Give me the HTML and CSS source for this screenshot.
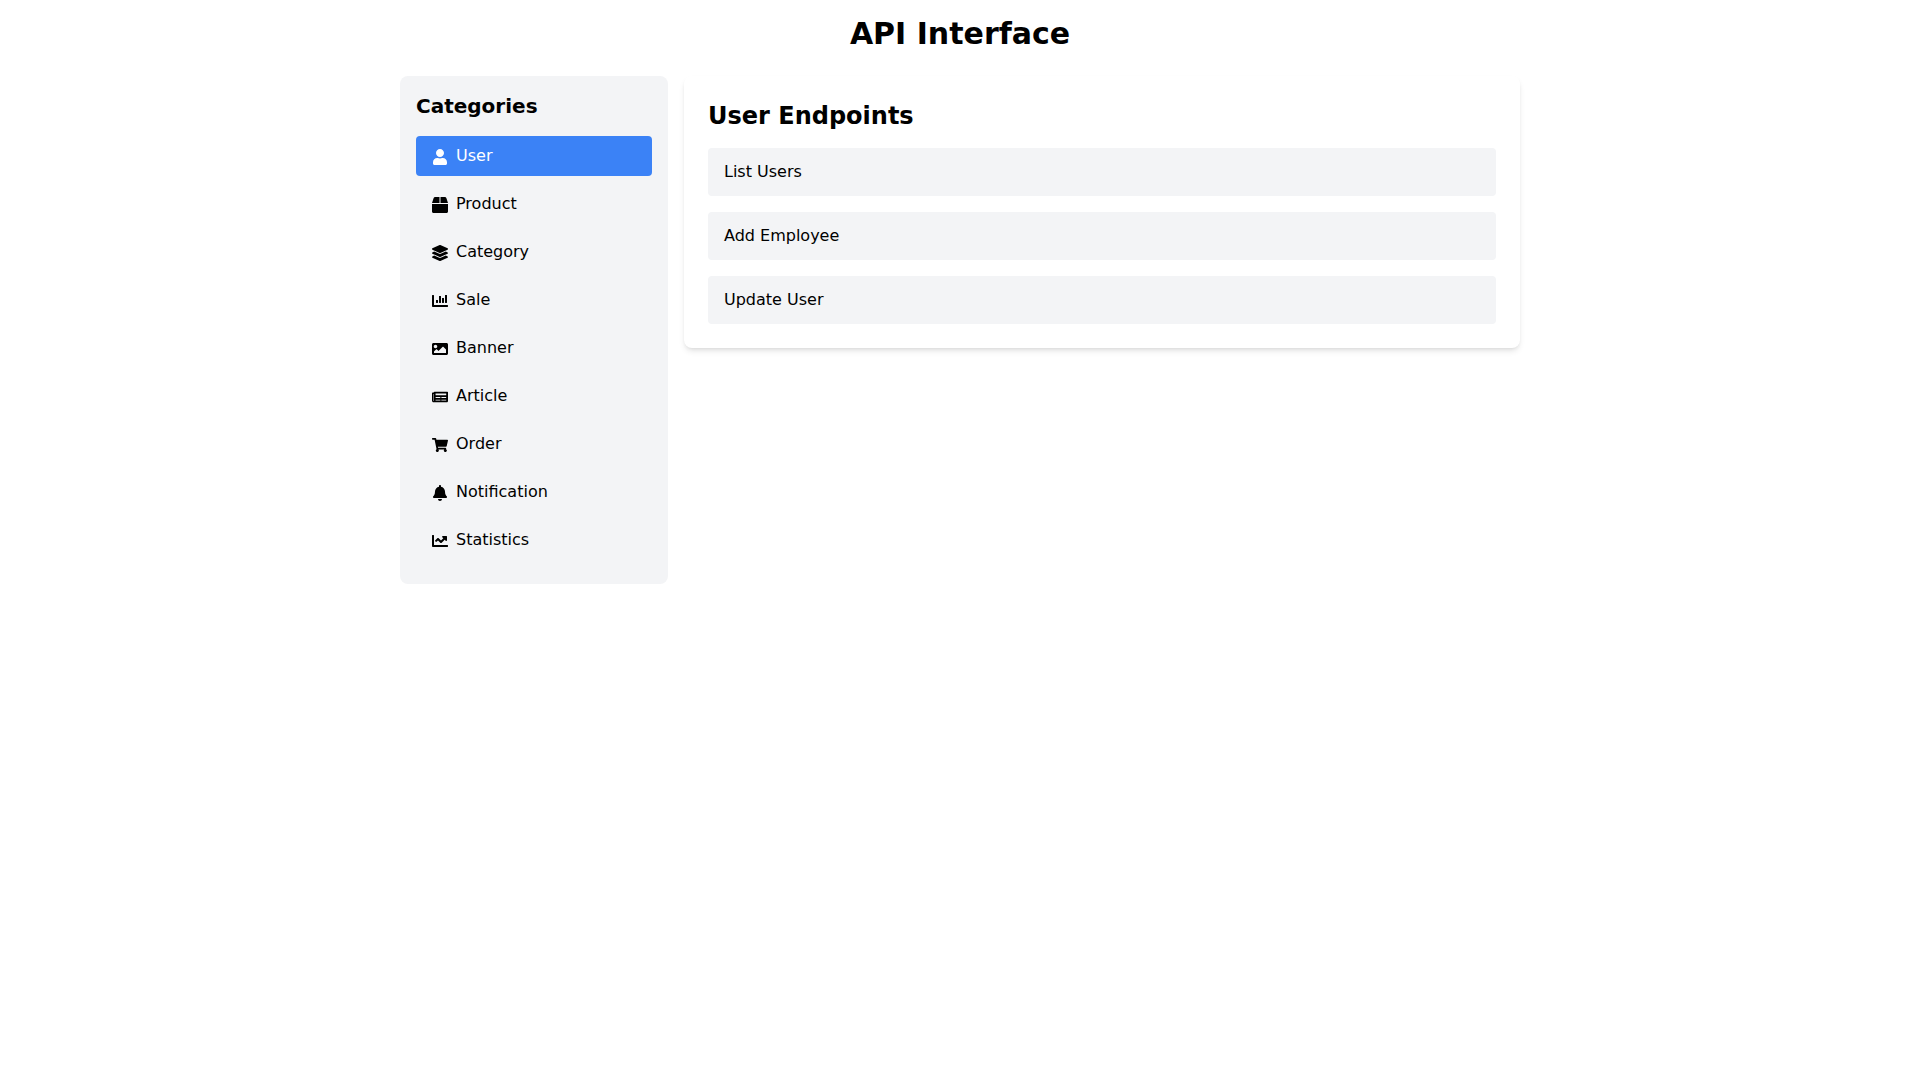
FILE: index.html
```html
<!DOCTYPE html>
<html lang="en">
<head>
    <meta charset="UTF-8">
    <meta name="viewport" content="width=device-width, initial-scale=1.0">
    <title>API Interface</title>
    <link rel="stylesheet" href="styles.css">
</head>
<body>
    <div class="container">
        <h1 class="page-title">API Interface</h1>

        <div class="layout">
            <!-- Sidebar -->
            <nav class="sidebar">
                <h2 class="sidebar-title">Categories</h2>
                <ul class="category-list">
                    <li>
                        <button class="category active">
                            <svg class="icon" viewBox="0 0 448 512"><path d="M224 256c70.7 0 128-57.3 128-128S294.7 0 224 0 96 57.3 96 128s57.3 128 128 128zm89.6 32h-16.7c-22.2 10.2-46.9 16-72.9 16s-50.6-5.8-72.9-16h-16.7C60.2 288 0 348.2 0 422.4V464c0 26.5 21.5 48 48 48h352c26.5 0 48-21.5 48-48v-41.6c0-74.2-60.2-134.4-134.4-134.4z"/></svg><span>User</span>
                        </button>
                    </li>
                    <li>
                        <button class="category">
                            <svg class="icon" viewBox="0 0 512 512"><path d="M509.5 184.6L458.9 32.8C452.4 13.2 434.1 0 413.4 0H272v192h238.7c-.4-2.5-.4-5-1.2-7.4zM240 0H98.6c-20.7 0-39 13.2-45.5 32.8L2.5 184.6c-.8 2.4-.8 4.9-1.2 7.4H240V0zM0 224v240c0 26.5 21.5 48 48 48h416c26.5 0 48-21.5 48-48V224H0z"/></svg><span>Product</span>
                        </button>
                    </li>
                    <li>
                        <button class="category">
                            <svg class="icon" viewBox="0 0 512 512"><path d="M12.41 148.02l232.94 105.67c6.8 3.09 14.49 3.09 21.29 0l232.94-105.67c16.55-7.51 16.55-32.52 0-40.03L266.65 2.31a25.607 25.607 0 0 0-21.29 0L12.41 107.98c-16.55 7.51-16.55 32.53 0 40.04zm487.18 88.28l-58.09-26.33-161.64 73.27c-7.56 3.43-15.59 5.17-23.86 5.17s-16.29-1.74-23.86-5.17L70.51 209.97l-58.1 26.33c-16.55 7.5-16.55 32.5 0 40l232.94 105.59c6.8 3.08 14.49 3.08 21.29 0L499.59 276.3c16.55-7.5 16.55-32.5 0-40zm0 127.8l-57.87-26.23-161.86 73.37c-7.56 3.43-15.59 5.17-23.86 5.17s-16.29-1.74-23.86-5.17L70.29 337.87 12.41 364.1c-16.55 7.5-16.55 32.5 0 40l232.94 105.59c6.8 3.08 14.49 3.08 21.29 0L499.59 404.1c16.55-7.5 16.55-32.5 0-40z"/></svg><span>Category</span>
                        </button>
                    </li>
                    <li>
                        <button class="category">
                            <svg class="icon" viewBox="0 0 512 512"><path d="M332.8 320h38.4c6.4 0 12.8-6.4 12.8-12.8V172.8c0-6.4-6.4-12.8-12.8-12.8h-38.4c-6.4 0-12.8 6.4-12.8 12.8v134.4c0 6.4 6.4 12.8 12.8 12.8zm96 0h38.4c6.4 0 12.8-6.4 12.8-12.8V76.8c0-6.4-6.4-12.8-12.8-12.8h-38.4c-6.4 0-12.8 6.4-12.8 12.8v230.4c0 6.4 6.4 12.8 12.8 12.8zm-288 0h38.4c6.4 0 12.8-6.4 12.8-12.8v-70.4c0-6.4-6.4-12.8-12.8-12.8h-38.4c-6.4 0-12.8 6.4-12.8 12.8v70.4c0 6.4 6.4 12.8 12.8 12.8zm96 0h38.4c6.4 0 12.8-6.4 12.8-12.8V108.8c0-6.4-6.4-12.8-12.8-12.8h-38.4c-6.4 0-12.8 6.4-12.8 12.8v198.4c0 6.4 6.4 12.8 12.8 12.8zM496 384H64V80c0-8.84-7.16-16-16-16H16C7.16 64 0 71.16 0 80v336c0 17.67 14.33 32 32 32h464c8.84 0 16-7.16 16-16v-32c0-8.84-7.16-16-16-16z"/></svg><span>Sale</span>
                        </button>
                    </li>
                    <li>
                        <button class="category">
                            <svg class="icon" viewBox="0 0 512 512"><path d="M464 448H48c-26.51 0-48-21.49-48-48V112c0-26.51 21.49-48 48-48h416c26.51 0 48 21.49 48 48v288c0 26.51-21.49 48-48 48zM112 120c-30.928 0-56 25.072-56 56s25.072 56 56 56 56-25.072 56-56-25.072-56-56-56zM64 384h384V272l-87.515-87.515c-4.686-4.686-12.284-4.686-16.971 0L208 320l-55.515-55.515c-4.686-4.686-12.284-4.686-16.971 0L64 336v48z"/></svg><span>Banner</span>
                        </button>
                    </li>
                    <li>
                        <button class="category">
                            <svg class="icon" viewBox="0 0 576 512"><path d="M552 64H88c-13.255 0-24 10.745-24 24v8H24c-13.255 0-24 10.745-24 24v272c0 30.928 25.072 56 56 56h472c26.51 0 48-21.49 48-48V88c0-13.255-10.745-24-24-24zM56 400a8 8 0 0 1-8-8V144h16v248a8 8 0 0 1-8 8zm236-16H140c-6.627 0-12-5.373-12-12v-8c0-6.627 5.373-12 12-12h152c6.627 0 12 5.373 12 12v8c0 6.627-5.373 12-12 12zm208 0H348c-6.627 0-12-5.373-12-12v-8c0-6.627 5.373-12 12-12h152c6.627 0 12 5.373 12 12v8c0 6.627-5.373 12-12 12zm-208-96H140c-6.627 0-12-5.373-12-12v-8c0-6.627 5.373-12 12-12h152c6.627 0 12 5.373 12 12v8c0 6.627-5.373 12-12 12zm208 0H348c-6.627 0-12-5.373-12-12v-8c0-6.627 5.373-12 12-12h152c6.627 0 12 5.373 12 12v8c0 6.627-5.373 12-12 12zm0-96H140c-6.627 0-12-5.373-12-12v-40c0-6.627 5.373-12 12-12h360c6.627 0 12 5.373 12 12v40c0 6.627-5.373 12-12 12z"/></svg><span>Article</span>
                        </button>
                    </li>
                    <li>
                        <button class="category">
                            <svg class="icon" viewBox="0 0 576 512"><path d="M528.12 301.319l47.273-208C578.806 78.301 567.391 64 551.99 64H159.208l-9.166-44.81C147.758 8.021 137.93 0 126.529 0H24C10.745 0 0 10.745 0 24v16c0 13.255 10.745 24 24 24h69.883l70.248 343.435C147.325 417.1 136 435.222 136 456c0 30.928 25.072 56 56 56s56-25.072 56-56c0-15.674-6.447-29.835-16.824-40h209.647C430.447 426.165 424 440.326 424 456c0 30.928 25.072 56 56 56s56-25.072 56-56c0-22.172-12.888-41.332-31.579-50.405l5.517-24.276c3.413-15.018-8.002-29.319-23.403-29.319H218.117l-6.545-32h293.145c11.206 0 20.92-7.754 23.403-18.681z"/></svg><span>Order</span>
                        </button>
                    </li>
                    <li>
                        <button class="category">
                            <svg class="icon" viewBox="0 0 448 512"><path d="M224 512c35.32 0 63.97-28.65 63.97-64H160.03c0 35.35 28.65 64 63.97 64zm215.39-149.71c-19.32-20.76-55.47-51.99-55.47-154.29 0-77.7-54.48-139.9-127.94-155.16V32c0-17.67-14.32-32-31.98-32s-31.98 14.33-31.98 32v20.84C118.56 68.1 64.08 130.3 64.08 208c0 102.3-36.15 133.53-55.47 154.29-6 6.45-8.66 14.16-8.61 21.71.11 16.4 12.98 32 32.1 32h383.8c19.12 0 32-15.6 32.1-32 .05-7.55-2.61-15.27-8.61-21.71z"/></svg><span>Notification</span>
                        </button>
                    </li>
                    <li>
                        <button class="category">
                            <svg class="icon" viewBox="0 0 512 512"><path d="M496 384H64V80c0-8.84-7.16-16-16-16H16C7.16 64 0 71.16 0 80v336c0 17.67 14.33 32 32 32h464c8.84 0 16-7.16 16-16v-32c0-8.84-7.16-16-16-16zM464 96H345.94c-21.38 0-32.09 25.85-16.97 40.97l32.4 32.4L288 242.75l-73.37-73.37c-12.5-12.5-32.76-12.5-45.25 0l-68.69 68.69c-6.25 6.25-6.25 16.38 0 22.63l22.62 22.62c6.25 6.25 16.38 6.25 22.63 0L192 237.25l73.37 73.37c12.5 12.5 32.76 12.5 45.25 0l96-96 32.4 32.4c15.12 15.12 40.97 4.41 40.97-16.97V112c.01-8.84-7.15-16-15.99-16z"/></svg><span>Statistics</span>
                        </button>
                    </li>
                </ul>
            </nav>

            <!-- Endpoints of the selected category -->
            <main class="panel">
                <h2 class="panel-title">User Endpoints</h2>
                <div class="endpoint-list">
                    <button class="endpoint">List Users</button>
                    <button class="endpoint">Add Employee</button>
                    <button class="endpoint">Update User</button>
                </div>
            </main>
        </div>
    </div>
</body>
</html>
```
FILE: styles.css
```css
* {
    box-sizing: border-box;
    margin: 0;
    padding: 0;
}

body {
    font-family: 'DejaVu Sans', sans-serif;
    font-size: 16px;
    line-height: 24px;
    color: #000;
    background-color: #fff;
}

button {
    font: inherit;
    color: inherit;
    background: none;
    border: none;
    text-align: left;
    cursor: pointer;
}

.container {
    max-width: 1152px;
    margin: 0 auto;
    padding: 16px;
}

.page-title {
    font-size: 30px;
    line-height: 36px;
    font-weight: bold;
    text-align: center;
    margin-bottom: 24px;
}

.layout {
    display: grid;
    grid-template-columns: repeat(4, 1fr);
    gap: 16px;
    align-items: start;
}

/* Sidebar */
.sidebar {
    background-color: #f3f4f6;
    padding: 16px;
    border-radius: 8px;
}

.sidebar-title {
    font-size: 20px;
    line-height: 28px;
    font-weight: bold;
    margin-bottom: 16px;
}

.category-list {
    list-style: none;
}

.category-list li {
    margin-bottom: 8px;
}

.category {
    display: block;
    width: 100%;
    padding: 8px 16px;
    border-radius: 4px;
}

.category:hover {
    background-color: #e5e7eb;
}

.category.active {
    background-color: #3b82f6;
    color: #fff;
}

.icon {
    display: inline-block;
    width: 16px;
    height: 16px;
    margin-right: 8px;
    vertical-align: -4px;
    fill: currentColor;
}

/* Endpoints */
.panel {
    grid-column: span 3;
    background-color: #fff;
    padding: 24px;
    border-radius: 8px;
    box-shadow: 0 4px 6px -1px rgba(0, 0, 0, 0.1), 0 2px 4px -2px rgba(0, 0, 0, 0.1);
}

.panel-title {
    font-size: 24px;
    line-height: 32px;
    font-weight: bold;
    margin-bottom: 16px;
}

.endpoint-list {
    display: flex;
    flex-direction: column;
    gap: 16px;
}

.endpoint {
    padding: 12px 16px;
    background-color: #f3f4f6;
    border-radius: 4px;
}

.endpoint:hover {
    background-color: #e5e7eb;
}
```
